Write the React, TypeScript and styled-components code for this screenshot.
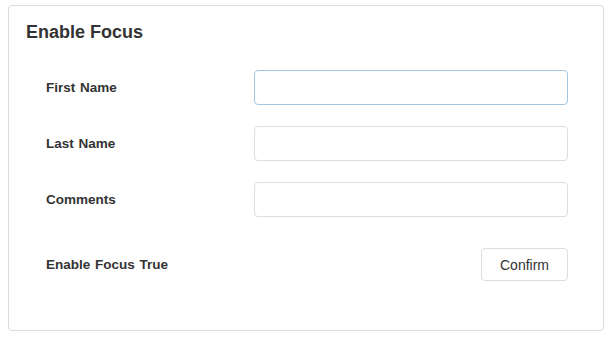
import React from "react";
import styled, { createGlobalStyle } from "styled-components";

const Global = createGlobalStyle`
  html, body { margin: 0; padding: 0; background: #fff; }
  body { font-family: "Liberation Sans", Arial, sans-serif; color: #333; }
  * { box-sizing: border-box; }
`;

const Page = styled.div`
  padding: 5px 8px 0 8px;
`;

const Panel = styled.div`
  height: 326px;
  border: 1px solid #dcdcdc;
  border-radius: 4px;
  padding: 16px 36px 0 17px;
`;

const Title = styled.h2`
  margin: 0;
  font-size: 18px;
  font-weight: bold;
  line-height: 20px;
  color: #333;
`;

const Form = styled.div`
  display: grid;
  grid-template-columns: 208px 1fr;
  row-gap: 21px;
  padding-left: 20px;
  margin-top: 28px;
  align-items: center;
`;

const Label = styled.label`
  font-size: 13.5px;
  font-weight: bold;
  color: #333;
  word-spacing: 1px;
`;

const Input = styled.input<{ $focus?: boolean }>`
  height: 35px;
  width: 314px;
  border: 1px solid ${(p) => (p.$focus ? "#a3c6e3" : "#dddddd")};
  border-radius: 4px;
  outline: none;
  font: inherit;
  padding: 0 8px;
`;

const LastRow = styled.div`
  grid-column: 1 / -1;
  display: flex;
  justify-content: space-between;
  align-items: center;
  margin-top: 10px;
`;

const Button = styled.button`
  width: 87px;
  height: 33px;
  border: 1px solid #dddddd;
  border-radius: 4px;
  background: #fff;
  font-family: "Liberation Sans", Arial, sans-serif;
  font-size: 14px;
  color: #333;
`;

export default function App() {
  return (
    <Page>
      <Global />
      <Panel>
        <Title>Enable Focus</Title>
        <Form>
          <Label>First Name</Label>
          <Input $focus />
          <Label>Last Name</Label>
          <Input />
          <Label>Comments</Label>
          <Input />
          <LastRow>
            <Label>Enable Focus True</Label>
            <Button>Confirm</Button>
          </LastRow>
        </Form>
      </Panel>
    </Page>
  );
}
